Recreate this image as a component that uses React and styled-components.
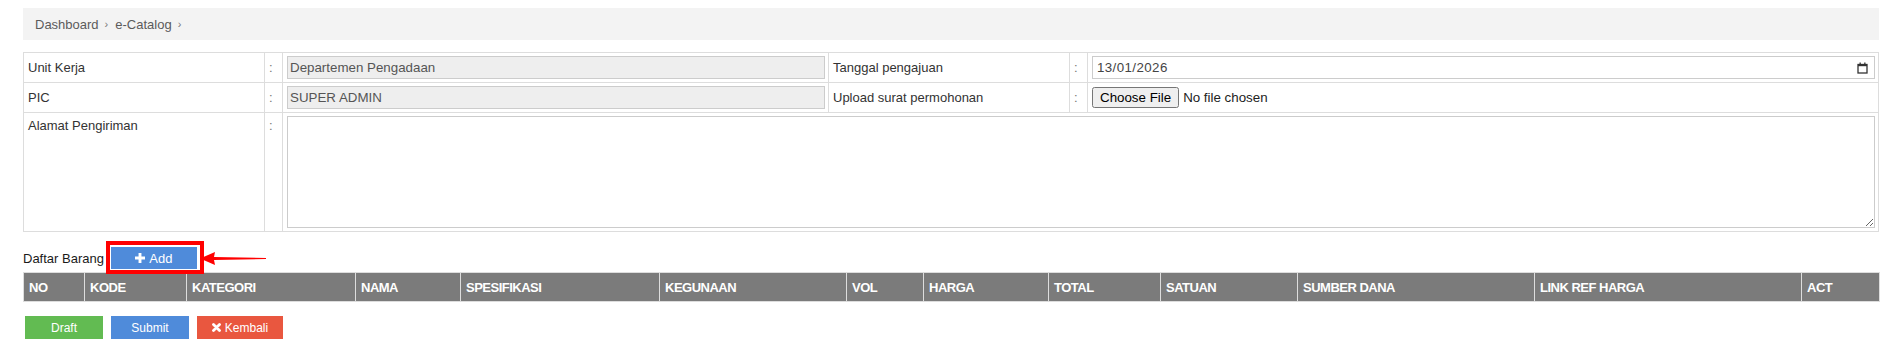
import React from "react";
import styled, { createGlobalStyle } from "styled-components";

const GlobalStyle = createGlobalStyle`
  body {
    margin: 0;
    background: #fff;
    font-family: "Liberation Sans", Arial, sans-serif;
    font-size: 13px;
    color: #333;
  }
`;

const Page = styled.div`
  padding: 8px 20px 15px 23px;
`;

const Breadcrumb = styled.div`
  display: flex;
  align-items: center;
  height: 32px;
  padding: 0 12px;
  background: #f3f3f3;
  color: #5b5b5b;
  font-size: 13px;
`;

const Sep = styled.span`
  margin: 0 7px 0 6px;
  font-size: 11px;
  color: #777;
`;

const FormTable = styled.table`
  width: 100%;
  margin-top: 12px;
  border-collapse: collapse;
  table-layout: fixed;
`;

const Cell = styled.td`
  border: 1px solid #ddd;
  padding: 3px 3px 3px 4px;
  vertical-align: ${(p) => (p.$top ? "top" : "middle")};
  line-height: 20px;
  color: ${(p) => (p.$muted ? "#777" : "#333")};
`;

const TextInput = styled.input`
  display: block;
  box-sizing: border-box;
  width: 100%;
  height: 23px;
  padding: 0 2px;
  border: 1px solid #ccc;
  background: #eee;
  color: #555;
  font: 13.33px "Liberation Sans", Arial, sans-serif;
`;

const DateBox = styled.div`
  display: flex;
  align-items: center;
  justify-content: space-between;
  box-sizing: border-box;
  height: 23px;
  padding: 0 6px 0 4px;
  border: 1px solid #ccc;
  background: #fff;
  color: #444;
  font: 13.33px "Liberation Sans", Arial, sans-serif;
  letter-spacing: 0.4px;
`;

const FileInput = styled.input`
  display: block;
  font: 13.33px "Liberation Sans", Arial, sans-serif;
  color: #222;
`;

const TextArea = styled.textarea`
  display: block;
  box-sizing: border-box;
  width: 100%;
  height: 112px;
  border: 1px solid #ccc;
  resize: vertical;
  font: 13px "Liberation Sans", Arial, sans-serif;
`;

const ListBar = styled.div`
  display: flex;
  align-items: center;
  gap: 7px;
  margin-top: 15px;
  height: 22px;
  font-size: 13px;
  color: #1a1a1a;
`;

const Marked = styled.span`
  position: relative;
  display: inline-flex;
`;

const MarkBox = styled.span`
  position: absolute;
  left: -5px;
  top: -6px;
  width: 90px;
  height: 25px;
  border: 4px solid #f00;
  pointer-events: none;
`;

const MarkArrow = styled.svg`
  position: absolute;
  left: 89px;
  top: 4px;
`;

const Button = styled.button`
  display: inline-flex;
  align-items: center;
  justify-content: center;
  gap: 4px;
  box-sizing: border-box;
  height: ${(p) => (p.$tall ? "22px" : "23px")};
  min-width: ${(p) => (p.$wide ? "86px" : "78px")};
  padding: 0 13px;
  border: none;
  background: ${(p) => p.$bg};
  color: #fff;
  font: ${(p) => (p.$big ? "13px" : "12px")} "Liberation Sans", Arial, sans-serif;
  cursor: pointer;
`;

const ItemTable = styled.table`
  width: 100%;
  margin-top: 3px;
  border-collapse: collapse;
  table-layout: fixed;
`;

const Head = styled.th`
  height: 28px;
  padding: 0 5px;
  border: 1px solid #ddd;
  background: #7b7b7b;
  color: #fff;
  text-align: left;
  font: bold 13px "Liberation Sans", Arial, sans-serif;
  letter-spacing: -0.5px;
  white-space: nowrap;
  overflow: hidden;
`;

const Actions = styled.div`
  display: flex;
  gap: 8px;
  margin-top: 14px;
  padding-left: 2px;
`;

const columns = [
  ["NO", 61],
  ["KODE", 102],
  ["KATEGORI", 169],
  ["NAMA", 105],
  ["SPESIFIKASI", 199],
  ["KEGUNAAN", 187],
  ["VOL", 77],
  ["HARGA", 125],
  ["TOTAL", 112],
  ["SATUAN", 137],
  ["SUMBER DANA", 237],
  ["LINK REF HARGA", 267],
  ["ACT", 78],
];

function CalendarIcon() {
  return (
    <svg width="11" height="12" viewBox="0 0 11 12">
      <rect x="1" y="2.5" width="9" height="8.5" fill="none" stroke="#333" strokeWidth="1.3" />
      <rect x="1" y="2" width="9" height="2.2" fill="#333" />
      <rect x="2.5" y="0.5" width="1.3" height="2" fill="#333" />
      <rect x="7.2" y="0.5" width="1.3" height="2" fill="#333" />
    </svg>
  );
}

function PlusIcon() {
  return (
    <svg width="10" height="10" viewBox="0 0 9 9">
      <path d="M3.2 0h2.6v3.2H9v2.6H5.8V9H3.2V5.8H0V3.2h3.2z" fill="#fff" />
    </svg>
  );
}

function TimesIcon() {
  return (
    <svg width="9" height="9" viewBox="0 0 9 9">
      <path d="M1.5 1.5l6 6M7.5 1.5l-6 6" stroke="#fff" strokeWidth="2.8" strokeLinecap="round" />
    </svg>
  );
}

export default function App() {
  return (
    <>
      <GlobalStyle />
      <Page>
        <Breadcrumb>
          <span>Dashboard</span>
          <Sep>›</Sep>
          <span>e-Catalog</span>
          <Sep>›</Sep>
        </Breadcrumb>

        <FormTable>
          <colgroup>
            <col style={{ width: 241 }} />
            <col style={{ width: 18 }} />
            <col style={{ width: 546 }} />
            <col style={{ width: 241 }} />
            <col style={{ width: 18 }} />
            <col />
          </colgroup>
          <tbody>
            <tr>
              <Cell>Unit Kerja</Cell>
              <Cell $muted>:</Cell>
              <Cell>
                <TextInput readOnly value="Departemen Pengadaan" />
              </Cell>
              <Cell>Tanggal pengajuan</Cell>
              <Cell $muted>:</Cell>
              <Cell>
                <DateBox>
                  <span>13/01/2026</span>
                  <CalendarIcon />
                </DateBox>
              </Cell>
            </tr>
            <tr>
              <Cell>PIC</Cell>
              <Cell $muted>:</Cell>
              <Cell>
                <TextInput readOnly value="SUPER ADMIN" />
              </Cell>
              <Cell>Upload surat permohonan</Cell>
              <Cell $muted>:</Cell>
              <Cell>
                <FileInput type="file" />
              </Cell>
            </tr>
            <tr>
              <Cell $top>Alamat Pengiriman</Cell>
              <Cell $top $muted>:</Cell>
              <Cell colSpan={4}>
                <TextArea />
              </Cell>
            </tr>
          </tbody>
        </FormTable>

        <ListBar>
          <span>Daftar Barang</span>
          <Marked>
            <Button $bg="#4f8bda" $tall $wide $big>
              <PlusIcon /> Add
            </Button>
            <MarkBox />
            <MarkArrow width="66" height="15" viewBox="0 0 66 15">
              <path d="M0 7.5L15 1l-1 5L66 7v1l-52 1 1 5z" fill="#f00" />
            </MarkArrow>
          </Marked>
        </ListBar>

        <ItemTable>
          <colgroup>
            {columns.map(([name, w]) => (
              <col key={name} style={{ width: w }} />
            ))}
          </colgroup>
          <thead>
            <tr>
              {columns.map(([name]) => (
                <Head key={name}>{name}</Head>
              ))}
            </tr>
          </thead>
        </ItemTable>

        <Actions>
          <Button $bg="#62bb52">Draft</Button>
          <Button $bg="#4f8bda">Submit</Button>
          <Button $bg="#e9573f" $wide>
            <TimesIcon /> Kembali
          </Button>
        </Actions>
      </Page>
    </>
  );
}
